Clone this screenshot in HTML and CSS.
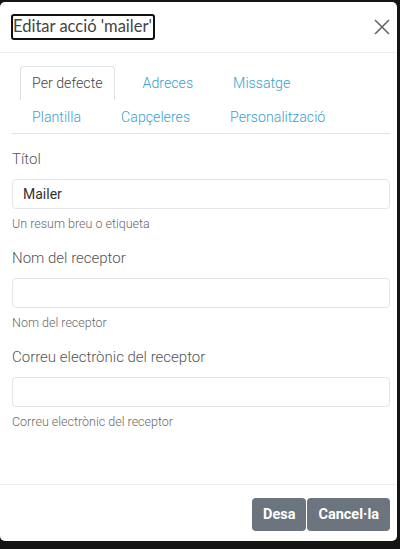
FILE: index.html
```html
<!DOCTYPE html>
<html lang="ca">
<head>
    <meta charset="UTF-8">
    <meta name="viewport" content="width=device-width, initial-scale=1.0">
    <title>Editar acció</title>
    <link rel="stylesheet" href="styles.css">
</head>
<body>
    <div class="modal">
        <div class="modal-header">
            <h5 class="modal-title"><span class="focused">Editar acció 'mailer'</span></h5>
            <button class="close" aria-label="Tanca">
                <svg width="16" height="16" viewBox="0 0 16 16">
                    <path d="M1 1 L15 15 M15 1 L1 15" stroke="#666" stroke-width="1.6" fill="none"/>
                </svg>
            </button>
        </div>
        <div class="modal-body">
            <ul class="nav-tabs">
                <li class="tab active">Per defecte</li>
                <li class="tab">Adreces</li>
                <li class="tab">Missatge</li>
                <li class="tab">Plantilla</li>
                <li class="tab">Capçeleres</li>
                <li class="tab">Personalització</li>
            </ul>
            <div class="tab-content">
                <div class="form-group">
                    <label for="title">Títol</label>
                    <input type="text" id="title" value="Mailer">
                    <small>Un resum breu o etiqueta</small>
                </div>
                <div class="form-group">
                    <label for="name">Nom del receptor</label>
                    <input type="text" id="name">
                    <small>Nom del receptor</small>
                </div>
                <div class="form-group">
                    <label for="email">Correu electrònic del receptor</label>
                    <input type="text" id="email">
                    <small>Correu electrònic del receptor</small>
                </div>
            </div>
        </div>
        <div class="modal-footer">
            <button class="btn">Desa</button>
            <button class="btn">Cancel·la</button>
        </div>
    </div>
</body>
</html>
```

FILE: styles.css
```css
body {
    margin: 0;
    background-color: #141414;
    font-family: Roboto, "Liberation Sans", sans-serif;
    color: #444;
}
.modal {
    width: 397px;
    height: 539px;
    margin-top: 2px;
    background-color: #fff;
    border-radius: 5px;
    display: flex;
    flex-direction: column;
}
.modal-header {
    height: 50px;
    border-bottom: 1px solid #e9ecef;
    display: flex;
    align-items: center;
    justify-content: space-between;
    padding: 0 7px 0 11px;
}
.modal-title {
    margin: 0;
    font-family: Lato, "Noto Sans", sans-serif;
    font-weight: normal;
    font-size: 16.5px;
    color: #444;
}
.focused {
    display: inline-block;
    border: 2px solid #111;
    border-radius: 3px;
    padding: 0 1px 1px 0;
    line-height: 21px;
}
.close {
    background: none;
    border: none;
    padding: 0;
    width: 16px;
    height: 16px;
    cursor: pointer;
}
.modal-body {
    flex: 1;
    padding: 13px 7px 0 12px;
}
.nav-tabs {
    list-style: none;
    margin: 0;
    padding: 0;
    display: flex;
    flex-wrap: wrap;
    border-bottom: 1px solid #dee2e6;
}
.tab {
    margin: 0 8px;
    padding: 0 11px;
    height: 34px;
    line-height: 33px;
    font-size: 14.2px;
    font-weight: 300;
    color: #3a9fd1;
    border: 1px solid transparent;
    border-bottom: none;
    border-radius: 4px 4px 0 0;
    box-sizing: border-box;
}
.tab + .tab + .tab + .tab {
    height: 33px;
}
.tab.active {
    color: #444;
    border-color: #dee2e6;
}
.tab-content {
    padding-top: 14px;
}
.form-group {
    margin-bottom: 14px;
}
.form-group label {
    display: block;
    font-size: 15px;
    font-weight: 300;
    line-height: 22px;
    color: #555;
    margin-bottom: 9px;
}
.form-group input {
    display: block;
    width: 100%;
    height: 30px;
    box-sizing: border-box;
    border: 1px solid #e2e4e8;
    border-radius: 4px;
    padding: 0 10px;
    font-family: Roboto, "Liberation Sans", sans-serif;
    font-size: 14px;
    color: #333;
}
.form-group small {
    display: block;
    margin-top: 6px;
    font-size: 12.5px;
    font-weight: 300;
    line-height: 18px;
    color: #6a6a6a;
}
.modal-footer {
    height: 57px;
    border-top: 1px solid #e9ecef;
    display: flex;
    justify-content: flex-end;
    align-items: flex-start;
    padding: 13px 7px 0 12px;
    box-sizing: border-box;
}
.btn {
    background-color: #6c757d;
    color: #fff;
    border: none;
    border-radius: 4px;
    height: 33px;
    padding: 0 11px;
    font-family: Roboto, "Liberation Sans", sans-serif;
    font-weight: bold;
    font-size: 14.5px;
    margin-left: 1px;
    cursor: pointer;
}
```
